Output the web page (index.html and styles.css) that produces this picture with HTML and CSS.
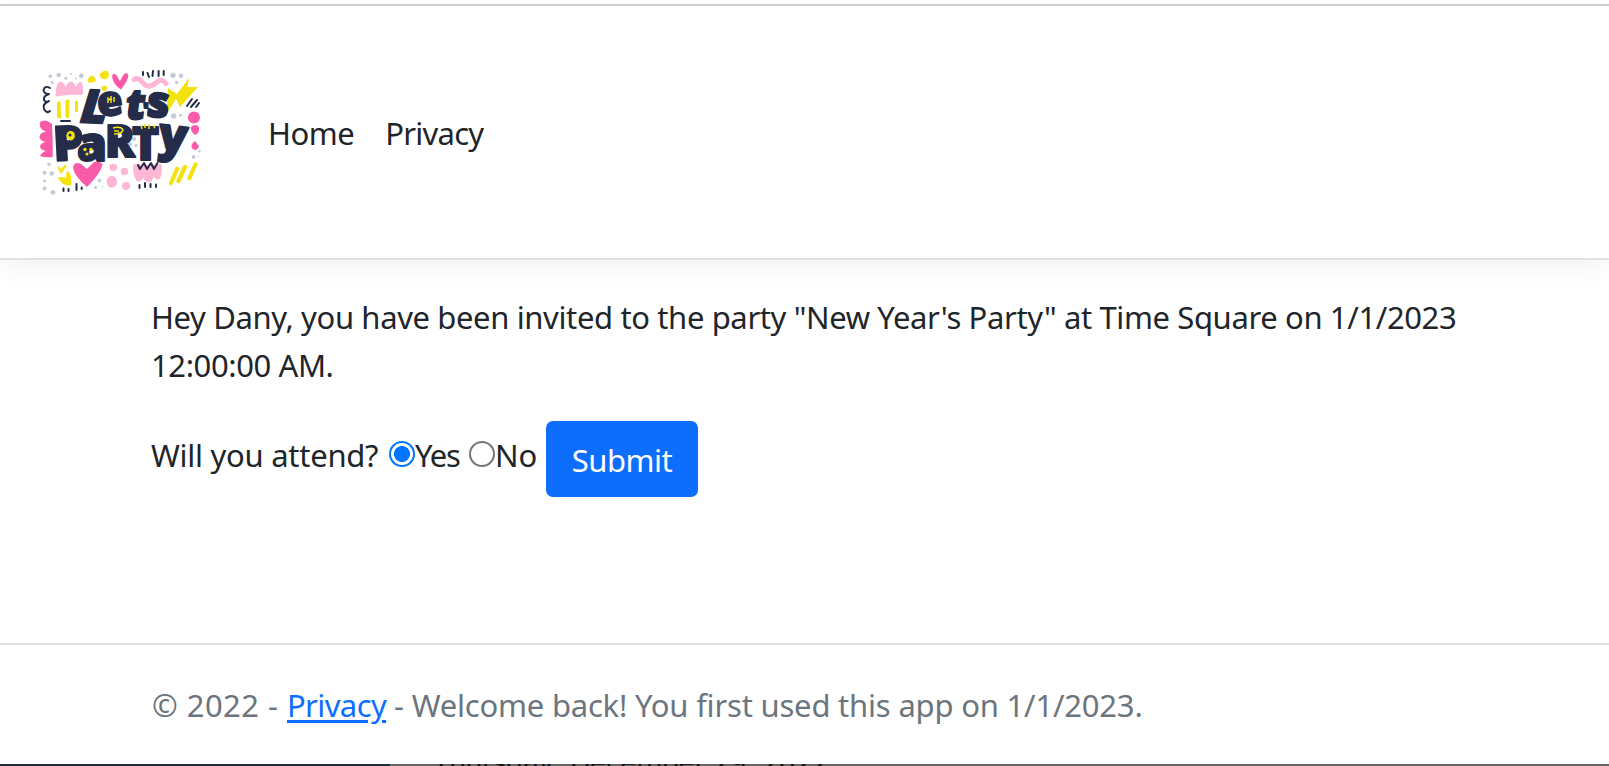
FILE: index.html
```html
<!DOCTYPE html>
<html lang="en">
<head>
<meta charset="utf-8">
<title>Party Invitation</title>
<link rel="stylesheet" href="styles.css">
</head>
<body>
<header class="header">
  <a class="brand" href="#">
    <svg class="logo" viewBox="36 66 170 132" role="img" aria-label="Let's Party">
      <g fill="#c3cad8">
        <circle cx="50.3" cy="76.3" r="1.8"/><circle cx="58.7" cy="75" r="2.3"/><circle cx="52.3" cy="82.5" r="1.6"/><circle cx="66" cy="78.3" r="1.6"/><circle cx="71" cy="74" r="1"/><circle cx="76" cy="78.5" r=".9"/><circle cx="81.3" cy="75.8" r="2.4"/>
        <circle cx="173" cy="75.3" r="2.6"/><circle cx="181" cy="75.8" r="2.3"/><circle cx="176.5" cy="82.5" r="1.7"/><circle cx="173.7" cy="116" r="2.6"/><circle cx="180.5" cy="115.3" r="1.5"/>
        <circle cx="49" cy="164.3" r="1.8"/><circle cx="44.5" cy="172.7" r="2"/><circle cx="51.8" cy="173.5" r="2.3"/><circle cx="44.4" cy="181" r="1.5"/><circle cx="44.5" cy="188.5" r="2"/><circle cx="53" cy="192.4" r="2.4"/><circle cx="99.4" cy="180.5" r="1.8"/><circle cx="95.5" cy="187.5" r="1.6"/><circle cx="102.5" cy="186.5" r=".8"/>
        <circle cx="193.7" cy="157" r="2"/><circle cx="199.5" cy="151.3" r="1.2"/><circle cx="198.5" cy="156.5" r=".8"/><circle cx="134" cy="139" r="2"/><circle cx="130" cy="144" r="2"/><circle cx="136" cy="145.5" r="1.6"/>
      </g>
      <g fill="#fdb6d5">
        <path d="M55.5 94.5Q56 82 60.5 81.5Q64 82 65.5 87Q68 81 71.500 81.500Q74 82 75.500 87Q78 81 82 82.500Q84 88 82.500 95Q69 94 56 96.500Z"/>
        <path d="M133.500 164Q148 166 161.500 164Q162.500 174 160 178.500Q156 181 154 176.500Q151 184 147 182Q144 181 143 177.500Q141 183 137 181Q132 175 133.500 164Z"/>
        <ellipse cx="113.300" cy="167.300" rx="4" ry="3.600"/><ellipse cx="111.800" cy="181.700" rx="5.200" ry="6"/><circle cx="124.500" cy="171.500" r="3.800"/><circle cx="126" cy="186" r="4"/>
      </g>
      <path d="M134 79.500Q138 77 142 82T150 86T157 82Q162 78 166 83.500" fill="none" stroke="#fdb6d5" stroke-width="5" stroke-linecap="round"/>
      <g fill="#fa5ba8">
        <path d="M112 76Q114 71.500 117 76L120 81L124 74Q127 72 128.500 75Q128 81 121 89.500Q113 85 112 76Z"/>
        <path d="M40 122Q46 118 52 124Q53 140 52.700 157Q45 158 40 156Q42 152 46 151Q40 150 40 146Q42 142 46 142Q39 141 39.500 136Q41 132 46 132Q38 128 40 122Z"/>
        <path d="M73 168Q74 161 81 164L87 169L94 162Q101 161 102.500 164.500Q101 173 87 187Q75 177 73 168Z"/>
        <circle cx="194" cy="117.500" r="6"/><path d="M191 127Q195 123 199 127Q200 133 195 135Q190 131 191 127Z"/><path d="M195 141L199 146Q198 150 194.500 150Q190 148 192 144Z"/>
      </g>
      <g fill="#f4e20c">
        <path d="M87.500 80Q90 75 93 76Q96 78 96 81Q91 84 88 82Z"/><path d="M99.500 75Q102 70 107.500 71Q111 76 106 79Q101 80 99.500 75Z"/><path d="M101 88Q104 84 107 87Q107 92 103 91Z"/>
        <path d="M57 102L60.500 101.500L61 118Q58 119 57 117ZM65.500 100L69.500 99.500L69 118L65.500 117.500ZM75 101H78V112H75Z"/>
        <path d="M166.500 114L168 88L177 94L189 78L187.500 87L198 87L180 107L176 99Z"/>
        <path d="M57 165L61 169L65 164.500Q67 164 66 167L61 174Q58 170 57 165Z"/><path d="M58 178Q61 176 65.500 178L67 171Q72 172 71.500 185Q63 187 58 178Z"/>
      </g>
      <path d="M171 183L177 169M178.500 181L185 167M189.500 178L195.500 164.500" fill="none" stroke="#f4e20c" stroke-width="4.200" stroke-linecap="round"/>
      <path d="M50 88Q45 85 43.500 90Q44 94 49 94Q43 96 44 100Q46 103 49 101Q42 104 44 109Q47 114 50 111M61 121H70M143 72V75M147.500 73L149 77M153 71L152.500 76M158.600 71V76M163.700 71V75M187 106L192 99M191 107L197 100M196 107L199 103M63.500 188.500V191M68.500 189V191M76.500 184V190M81.700 187.500V189M138 165L140 169L144 163L147 169L151 163L154 169L157.500 163M139.500 185V188M145 183V187M150.500 184V187M156 184.500V187" fill="none" stroke="#252c49" stroke-width="2" stroke-linecap="round" stroke-linejoin="round"/>
      <g class="lettering">
        <text transform="translate(77 122) rotate(3) skewX(-14)" font-size="46">L</text>
        <text transform="translate(99 117) rotate(-8)" font-size="41">e</text>
        <text transform="translate(124 119) skewX(-8)" font-size="42">t</text>
        <text transform="translate(143 117)" font-size="20">'</text>
        <text transform="translate(146 116) rotate(5)" font-size="43">s</text>
        <text transform="translate(54 161) rotate(-3)" font-size="48">P</text>
        <text transform="translate(77 161)" font-size="48">a</text>
        <text transform="translate(105 157)" font-size="44">R</text>
        <text transform="translate(132 160)" font-size="46">T</text>
        <text transform="translate(157 150) rotate(7)" font-size="47">y</text>
      </g>
      <ellipse cx="70.700" cy="135.700" rx="4.200" ry="4.800" fill="#f4e20c"/><circle cx="70" cy="135" r="1.500" fill="#252c49"/>
      <g fill="#f4e20c"><circle cx="85" cy="149.500" r="1.700"/><circle cx="91" cy="149.500" r="1.700"/><circle cx="87" cy="154" r="1.500"/></g>
      <path d="M108 97V103M111 96V103M114 97V102M113 128Q121 126 123 130Q122 134 114 134M114 131H119M141 125L142 129M145 124V128M149 124V129M153 125L155 128" fill="none" stroke="#f4e20c" stroke-width="1.500"/>
    </svg>
  </a>
  <nav class="nav"><a class="home" href="#">Home</a><a class="privacy" href="#">Privacy</a></nav>
</header>
<main class="main">
  <p class="invite"><span class="line first">Hey Dany, you have been invited to the party "New Year's Party" at Time Square on 1/1/2023</span> <span class="line second">12:00:00 AM.</span></p>
  <form class="form">
    <span class="question">Will you attend?</span>
    <label class="option yes"><input class="radio" type="radio" name="attend" checked><span>Yes</span></label>
    <label class="option no"><input class="radio" type="radio" name="attend"><span>No</span></label>
    <button class="submit" type="button">Submit</button>
  </form>
</main>
<footer class="footer"><span class="copy">© 2022 - </span><a class="footer-link" href="#">Privacy</a><span class="welcome"> - Welcome back! You first used this app on 1/1/2023.</span></footer>
<div class="strip"><div class="strip-dark"></div><div class="strip-text">Thursday, December 29, 2022</div></div>
</body>
</html>
```
FILE: styles.css
```css
* { box-sizing: border-box; }
body {
  margin: 0;
  height: 766px;
  padding-top: 4px;
  display: flex;
  flex-direction: column;
  overflow: hidden;
  background: #fff;
  color: #212529;
  font-family: "Noto Sans", "Open Sans", sans-serif;
  font-size: 31px;
  line-height: 48px;
}
.header {
  height: 256px;
  flex: none;
  display: flex;
  align-items: center;
  padding-left: 36px;
  border-top: 2px solid #ccc;
  border-bottom: 2px solid #dee2e6;
  box-shadow: 0 8px 24px rgba(0, 0, 0, .05);
}
.brand, .logo { display: block; }
.logo { width: 170px; height: 132px; }
.lettering {
  font-family: "Open Sans", sans-serif;
  font-weight: 800;
  fill: #252c49;
  stroke: #252c49;
  stroke-width: 2px;
  stroke-linejoin: round;
}
.nav { display: flex; gap: 33px; margin-left: 62px; padding-top: 1px; }
.nav a { color: #212529; text-decoration: none; white-space: nowrap; }
.home { letter-spacing: -.5px; }
.privacy { margin-left: -2px; letter-spacing: -.75px; }
.main { flex: none; height: 383px; padding: 33px 0 0 151px; }
.invite { margin: 0 0 32px; }
.line { display: block; white-space: nowrap; }
.first { letter-spacing: -.375px; }
.second { letter-spacing: -.4px; }
.form { display: flex; align-items: flex-start; white-space: nowrap; }
.question { width: 238px; padding-top: 10px; letter-spacing: -.27px; }
.option { display: flex; align-items: flex-start; padding-top: 10px; }
.yes { width: 80px; letter-spacing: -1.3px; }
.no { width: 77px; }
.radio {
  appearance: none;
  flex: none;
  width: 26px;
  height: 26px;
  margin: 10px 0 0;
  border: 2px solid #767676;
  border-radius: 50%;
}
.radio:checked {
  border-color: #0075ff;
  background: radial-gradient(circle, #0075ff 7.7px, #fff 8.3px);
}
.submit {
  width: 152px;
  height: 76px;
  padding: 2px 0 0;
  border: 0;
  border-radius: 7px;
  background: #0d6efd;
  color: #fff;
  font: inherit;
  letter-spacing: -.5px;
}
.footer {
  flex: none;
  height: 121px;
  padding: 36px 0 0 152px;
  border-top: 2px solid #dee2e6;
  color: #6c757d;
  white-space: pre;
}
.copy { letter-spacing: .45px; }
.footer-link {
  color: #0d6efd;
  letter-spacing: -.6px;
  text-underline-offset: 3px;
  text-decoration-thickness: 3px;
}
.welcome { letter-spacing: -.2px; }
.strip { display: flex; flex: none; height: 2px; overflow: hidden; background: #666; }
.strip-dark { flex: none; width: 390px; height: 2px; background: #1f2d35; }
.strip-text {
  margin: -17px 0 0 43px;
  color: #111;
  font: 27px/32px "DejaVu Sans", sans-serif;
  letter-spacing: -.6px;
  white-space: nowrap;
}
```
